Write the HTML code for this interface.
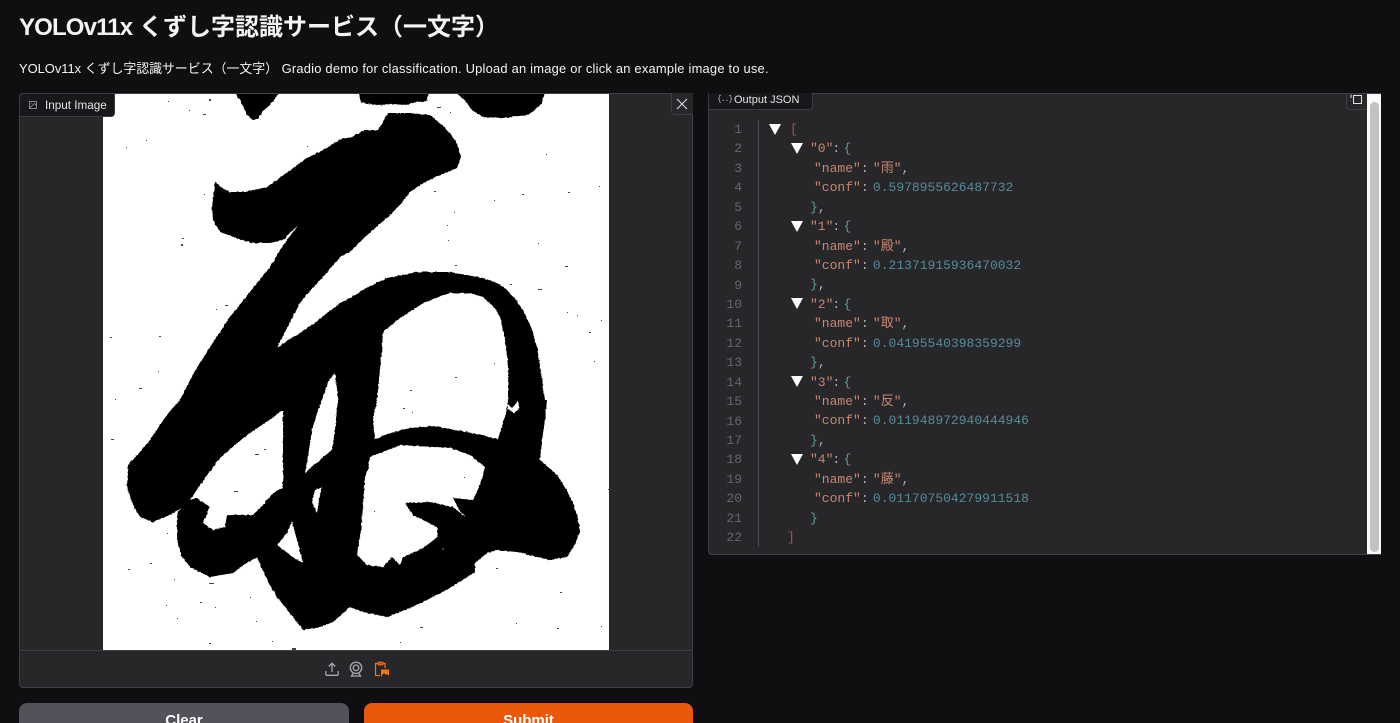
<!DOCTYPE html>
<html lang="ja"><head><meta charset="utf-8"><title>YOLOv11x くずし字認識サービス（一文字）</title>
<style>
*{box-sizing:border-box}
html,body{margin:0;width:1400px;height:723px;overflow:hidden;background:#0f0f11;color:#f4f4f5;font-family:"Liberation Sans","Noto Sans CJK JP",sans-serif}
.a{position:absolute}
h1{position:absolute;left:19px;top:12px;margin:0;font-size:24px;line-height:32px;font-weight:700;white-space:nowrap}
h1 span{letter-spacing:-.85px}
.sub{left:19px;top:60px;font-size:12.9px;line-height:17px;white-space:nowrap}
.sub span{letter-spacing:.22px}
.panel{background:#27272a;border:1px solid #3f3f46}
.label{background:#18181b;color:#e4e4e7;font-size:11.7px;white-space:nowrap;border:1px solid #3a3a40}
.btn{top:703px;height:20px;overflow:hidden;border-radius:8px 8px 0 0;text-align:center;font-weight:700;font-size:15px;line-height:36px;color:#fff}
.code{font:13px/19.43px "Liberation Mono","Noto Sans CJK JP",monospace;white-space:pre;color:#bfc4cc}
.l{position:absolute;height:19.43px}
.n{position:absolute;left:722px;width:20px;text-align:right;color:#62666e;font:13px/19.43px "Liberation Mono",monospace}
.s{color:#c98670}.v{color:#558a9c}.b{color:#58a097}.r{color:#a84f58}.p{color:#b0b5bd;margin-right:-3.5px}
.q{color:#b0b5bd;margin-left:-1px;margin-right:-4.5px}
.t{position:absolute;width:0;height:0;border-left:6px solid transparent;border-right:6px solid transparent;border-top:11px solid #fff}
</style></head><body>
<h1><span>YOLOv11x</span> くずし字認識サービス（一文字）</h1>
<div class="a sub">YOLOv11x くずし字認識サービス（一文字） <span>Gradio demo for classification. Upload an image or click an example image to use.</span></div>

<div class="a panel" style="left:19px;top:93px;width:674px;height:595px;border-radius:4px"></div>
<svg class="a" style="left:103px;top:94px" width="506" height="556" viewBox="103 94 506 556">
<defs><filter id="j" x="90" y="80" width="540" height="590" filterUnits="userSpaceOnUse"><feTurbulence type="fractalNoise" baseFrequency=".38" numOctaves="2" seed="4" result="n"/><feDisplacementMap in="SourceGraphic" in2="n" scale="2.2" xChannelSelector="R" yChannelSelector="G"/><feGaussianBlur stdDeviation=".3"/></filter></defs>
<rect x="103" y="94" width="506" height="556" fill="#fff"/>
<g filter="url(#j)">
<path fill-rule="evenodd" d="M215 182L222 188L230 192L245 192L267 187L285 174L307 158L325 149L343 138L350 138L365 130L378 130L388 113L410 113L430 115L441 124L450 133L457 144L461 157L457 168L446 173L433 178L420 185L410 192L400 205L388 217L375 228L362 240L350 252L340 257L330 269L320 280L310 291L300 303L292 318L277 348L288 340L300 333L320 319L340 303L350 298L368 287L387 278L417 272L450 272L483 278L497 283L507 290L516 300L523 310L531 327L537 347L541 372L545 400L547 400L545 420L543 433L540 460L548 467L557 475L566 489L573 503L577 515L580 530L575 545L567 557L550 560L533 556L517 552L497 550L487 553L475 563L475 572L460 582L443 592L423 602L405 610L387 617L367 613L350 607L333 622L320 627L303 630L293 617L277 597L266 578L257 557L245 564L233 573L210 577L190 567L181 555L177 540L177 513L182 508L168 516L153 522L140 517L132 503L127 487L128 465L140 452L150 440L160 425L170 411L180 400L195 371L210 347L230 317L257 283L270 267L280 250L290 236L298 225L283 240L270 243L253 243L236 238L220 232L213 220L212 207L214 192Z
M383 332L400 318L425 302L450 293L470 293L483 297L493 306L500 317L505 340L508 363L508 400L505 417L498 439L467 432L433 426L410 428L390 433L375 439L373 420L377 400L380 370L382 347Z
M370 457L400 445L450 448L470 455L485 467L480 484L473 500L453 498L458 508L465 517L453 507L430 502L405 503L413 515L437 527L438 537L423 548L403 557L400 565L392 557L383 567L367 565L357 555L361 530L363 507L365 477L368 470Z
M335 373L338 397L335 430L332 450L322 458L305 473L309 450L312 430L318 410L322 400L328 382Z
M283 410L283 488L273 493L262 506L253 515L227 515L225 527L213 530L203 523L210 507L197 498L190 500L205 478L220 458L235 445L250 433L268 421Z
M322 487L319 500L317 513L312 502L315 490Z
M292 522L297 540L303 563L293 557L277 545L287 533Z
M507 403L512 408L518 401L520 408L514 413L508 409Z"/>
<path d="M235 92L280 92L272 103L262 112L258 119L253 120L247 115L242 104Z"/>
<path d="M358 92L429 92L427 101L417 102L405 105L392 104L380 105L367 104L361 102Z"/>
<path d="M456 92L545 92L542 103L532 112L527 115L503 118L483 117L472 110L467 103Z"/>
</g>
<path fill="#444" d="M168 101h1v1h-1zM209 99h2v2h-2zM189 110h1v1h-1zM203 114h3v1h-3zM126 147h1v1h-1zM146 140h1v1h-1zM307 146h1v1h-1zM204 194h1v1h-1zM182 238h2v1h-2zM181 244h2v2h-2zM225 305h3v1h-3zM216 309h1v1h-1zM110 337h2v1h-2zM159 336h2v1h-2zM158 371h1v1h-1zM139 388h3v1h-3zM115 399h1v1h-1zM437 107h4v1h-4zM450 112h1v1h-1zM546 154h1v1h-1zM599 186h1v1h-1zM568 192h2v1h-2zM522 194h2v1h-2zM494 200h1v1h-1zM434 191h2v1h-2zM454 212h1v1h-1zM447 225h1v1h-1zM448 240h1v1h-1zM538 243h1v1h-1zM455 265h2v1h-2zM565 266h3v1h-3zM538 289h4v1h-4zM510 284h2v1h-2zM489 280h2v1h-2zM567 312h1v1h-1zM577 315h1v1h-1zM601 320h1v1h-1zM589 332h2v1h-2zM594 361h1v1h-1zM494 363h1v1h-1zM455 377h2v1h-2zM410 390h2v1h-2zM111 439h3v1h-3zM255 454h4v1h-4zM264 449h2v1h-2zM234 491h4v1h-4zM167 533h1v1h-1zM150 563h2v1h-2zM128 569h2v1h-2zM174 579h1v1h-1zM209 583h5v1h-5zM200 602h2v1h-2zM215 607h1v1h-1zM166 605h1v1h-1zM177 618h1v1h-1zM250 597h1v1h-1zM256 621h1v1h-1zM209 643h2v1h-2zM272 641h1v1h-1zM292 648h4v2h-4zM403 408h2v1h-2zM412 412h1v1h-1zM464 477h1v1h-1zM374 511h1v1h-1zM442 548h2v2h-2zM496 568h2v1h-2zM560 592h2v1h-2zM516 623h1v1h-1zM557 628h2v1h-2zM601 626h1v1h-1zM420 627h3v1h-3zM400 642h1v1h-1zM608 489h1v1h-1z"/>
</svg>
<div class="a" style="left:20px;top:650px;width:672px;height:1px;background:#3f3f46"></div>

<div class="a label" style="left:19px;top:93px;width:96px;height:24px;border-radius:4px 0 4px 0;line-height:24px;padding-left:25px">Input Image</div>
<svg class="a" style="left:29px;top:101px" width="8" height="8" viewBox="0 0 8 8" fill="none" stroke="#a1a1aa" stroke-width=".8"><rect x=".5" y=".5" width="7" height="7"/><path d="M.5 7L5.5 2.500L7.500 4.500M2 2.500h.6"/></svg>
<div class="a" style="left:671px;top:93px;width:22px;height:22px;background:#27272a;border-left:1px solid #3f3f46;border-bottom:1px solid #3f3f46;border-radius:0 0 0 4px"></div>
<svg class="a" style="left:676px;top:98px" width="12" height="12" viewBox="0 0 12 12" stroke="#e4e4e7" stroke-width="1"><path d="M1 1L11 11M11 1L1 11"/></svg>

<svg class="a" style="left:324px;top:661px" width="16" height="16" viewBox="0 0 16 16" fill="none" stroke="#a8a8b0" stroke-width="1.300"><path d="M8 11V2.500M4.800 5.500L8 2.200L11.200 5.500M1.800 10v3.300a1 1 0 0 0 1 1h10.400a1 1 0 0 0 1-1V10"/></svg>
<svg class="a" style="left:348px;top:661px" width="16" height="16" viewBox="0 0 16 16" fill="none" stroke="#a8a8b0" stroke-width="1.300"><circle cx="8" cy="6.800" r="5.700"/><circle cx="8" cy="6.800" r="2.800"/><path d="M5 12.500L3.500 15H12.500L11 12.500"/></svg>
<svg class="a" style="left:373px;top:661px" width="17" height="17" viewBox="0 0 17 17" fill="none"><path d="M5 2.500H2.500V14.500H7M10 2.500H12V7" stroke="#f97316" stroke-width="1.200"/><rect x="4.800" y="1" width="5.400" height="3" rx="1" fill="#b3541e" stroke="#f97316" stroke-width=".8"/><path d="M8 8.500H16V16H8Z" fill="#f97316"/><path d="M8.500 15L11 12L13 14L14 13L16 15V16H8.500Z" fill="#27272a"/></svg>

<div class="a btn" style="left:19px;width:330px;background:#52525b">Clear</div>
<div class="a btn" style="left:364px;width:329px;background:#ea580c">Submit</div>

<div class="a panel" style="left:708px;top:93px;width:673px;height:462px;border-radius:4px 0 0 4px"></div>
<div class="a" style="left:1367px;top:94px;width:14px;height:460px;background:#fafafa"></div>
<div class="a" style="left:1370px;top:102px;width:9px;height:450px;background:#c2c2c2;border-radius:5px"></div>
<div class="a label" style="left:708px;top:93px;width:105px;height:17px;border-radius:0 0 4px 0;line-height:13px;padding-left:25px;font-size:11px;border-top:0"><span style="position:relative;top:1px">Output JSON</span></div>
<div class="a" style="left:717px;top:95px;font:8px/10px 'Liberation Mono',monospace;color:#b4b4bb;letter-spacing:-1px">{..}</div>
<div class="a" style="left:1346px;top:93px;width:21px;height:17px;border-left:1px solid #3f3f46;border-bottom:1px solid #3f3f46;border-radius:0 0 0 4px"></div>
<svg class="a" style="left:1350px;top:93px" width="14" height="12" viewBox="0 0 14 12" fill="none" stroke="#e4e4e7" stroke-width="1"><rect x="3.500" y="2.500" width="8" height="8"/><path d="M1 1.500V5"/></svg>

<div class="a" style="left:758px;top:120px;width:1px;height:427px;background:#4b4b52"></div>
<div class="n" style="top:120px">1<br>2<br>3<br>4<br>5<br>6<br>7<br>8<br>9<br>10<br>11<br>12<br>13<br>14<br>15<br>16<br>17<br>18<br>19<br>20<br>21<br>22</div>

<div class="t" style="left:769px;top:124px"></div>
<div class="t" style="left:791px;top:143px"></div>
<div class="t" style="left:791px;top:221px"></div>
<div class="t" style="left:791px;top:298px"></div>
<div class="t" style="left:791px;top:376px"></div>
<div class="t" style="left:791px;top:454px"></div>

<div class="a code" style="left:0;top:120px;width:1360px;height:440px">
<span class="l r" style="left:790px;top:0">[</span>
<span class="l" style="left:810px;top:19.430px"><span class="s">"0"</span><span class="q">: </span><span class="b">{</span></span>
<span class="l" style="left:814px;top:38.860px"><span class="s">"name"</span><span class="p">: </span><span class="s">"雨"</span><span class="p">,</span></span>
<span class="l" style="left:814px;top:58.290px"><span class="s">"conf"</span><span class="p">: </span><span class="v">0.5978955626487732</span></span>
<span class="l" style="left:810px;top:77.720px"><span class="b">}</span><span class="p">,</span></span>
<span class="l" style="left:810px;top:97.150px"><span class="s">"1"</span><span class="q">: </span><span class="b">{</span></span>
<span class="l" style="left:814px;top:116.580px"><span class="s">"name"</span><span class="p">: </span><span class="s">"殿"</span><span class="p">,</span></span>
<span class="l" style="left:814px;top:136.010px"><span class="s">"conf"</span><span class="p">: </span><span class="v">0.21371915936470032</span></span>
<span class="l" style="left:810px;top:155.440px"><span class="b">}</span><span class="p">,</span></span>
<span class="l" style="left:810px;top:174.870px"><span class="s">"2"</span><span class="q">: </span><span class="b">{</span></span>
<span class="l" style="left:814px;top:194.300px"><span class="s">"name"</span><span class="p">: </span><span class="s">"取"</span><span class="p">,</span></span>
<span class="l" style="left:814px;top:213.730px"><span class="s">"conf"</span><span class="p">: </span><span class="v">0.04195540398359299</span></span>
<span class="l" style="left:810px;top:233.160px"><span class="b">}</span><span class="p">,</span></span>
<span class="l" style="left:810px;top:252.590px"><span class="s">"3"</span><span class="q">: </span><span class="b">{</span></span>
<span class="l" style="left:814px;top:272.020px"><span class="s">"name"</span><span class="p">: </span><span class="s">"反"</span><span class="p">,</span></span>
<span class="l" style="left:814px;top:291.450px"><span class="s">"conf"</span><span class="p">: </span><span class="v">0.011948972940444946</span></span>
<span class="l" style="left:810px;top:310.880px"><span class="b">}</span><span class="p">,</span></span>
<span class="l" style="left:810px;top:330.310px"><span class="s">"4"</span><span class="q">: </span><span class="b">{</span></span>
<span class="l" style="left:814px;top:349.740px"><span class="s">"name"</span><span class="p">: </span><span class="s">"藤"</span><span class="p">,</span></span>
<span class="l" style="left:814px;top:369.170px"><span class="s">"conf"</span><span class="p">: </span><span class="v">0.011707504279911518</span></span>
<span class="l" style="left:810px;top:388.600px"><span class="b">}</span></span>
<span class="l r" style="left:787px;top:408.030px">]</span>
</div>
</body></html>
